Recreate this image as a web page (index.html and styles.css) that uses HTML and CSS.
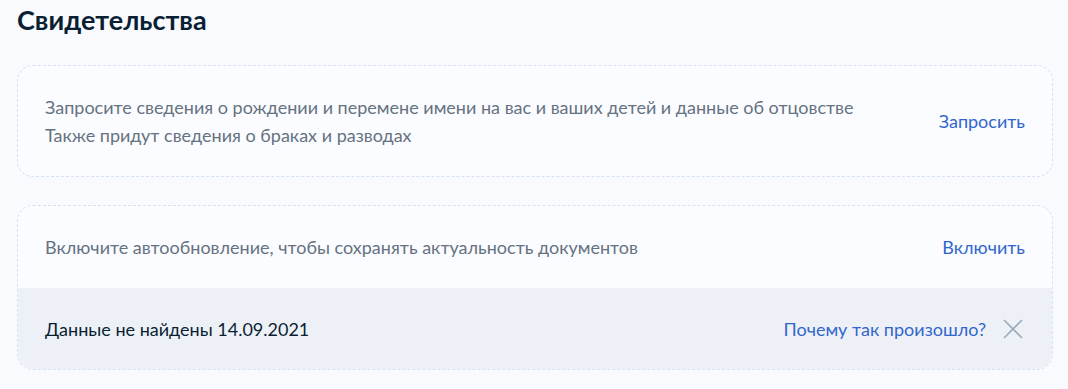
FILE: index.html
```html
<!DOCTYPE html>
<html lang="ru">
<head>
  <meta charset="UTF-8">
  <meta name="viewport" content="width=device-width, initial-scale=1.0">
  <title>Свидетельства</title>
  <link rel="stylesheet" href="styles.css">
</head>
<body>
  <main class="page">
    <h1 class="title">Свидетельства</h1>

    <!-- Request card -->
    <section class="card">
      <div class="row">
        <p class="row-text">Запросите сведения о рождении и перемене имени на вас и ваших детей и данные об отцовстве<br>Также придут сведения о браках и разводах</p>
        <a class="link" href="#">Запросить</a>
      </div>
    </section>

    <!-- Auto update card -->
    <section class="card">
      <div class="row row-single">
        <p class="row-text">Включите автообновление, чтобы сохранять актуальность документов</p>
        <a class="link" href="#">Включить</a>
      </div>
      <div class="row row-single row-status">
        <p class="row-text status-text">Данные не найдены 14.09.2021</p>
        <div class="status-actions">
          <a class="link" href="#">Почему так произошло?</a>
          <button class="close" type="button" aria-label="Закрыть">
            <svg width="20" height="20" viewBox="0 0 20 20" fill="none">
              <path d="M1 1L19 19M19 1L1 19" stroke="#9aabbe" stroke-width="1.6"/>
            </svg>
          </button>
        </div>
      </div>
    </section>
  </main>
</body>
</html>
```

FILE: styles.css
```css
/* General styles */
* {
  box-sizing: border-box;
}

body {
  margin: 0;
  font-family: Lato, "Liberation Sans", sans-serif;
  background-color: #f8fafe;
  color: #0b1f33;
}

.page {
  padding: 0 15px 0 17px;
}

.title {
  margin: 0;
  padding-top: 4px;
  height: 65px;
  font-size: 27px;
  line-height: 32px;
  font-weight: 700;
  color: #0b1f33;
}

/* Cards */
.card {
  border: 1px dashed #d4e2f3;
  border-radius: 16px;
  background-color: #fafcff;
  overflow: hidden;
  margin-bottom: 28px;
}

.row {
  display: flex;
  align-items: center;
  justify-content: space-between;
  padding: 27px;
}

.row-single {
  height: 82px;
  padding-top: 0;
  padding-bottom: 0;
}

.row-text {
  margin: 0;
  font-size: 18px;
  line-height: 28px;
  color: #66727f;
}

.link {
  font-size: 18px;
  line-height: 24px;
  color: #3366cc;
  text-decoration: none;
}

/* Status row */
.row-status {
  background-color: #edf1f7;
  margin: 0 -1px -1px;
  padding-left: 28px;
  padding-right: 30px;
}

.status-text {
  color: #0b1f33;
}

.status-actions {
  display: flex;
  align-items: center;
  gap: 17px;
}

.close {
  display: flex;
  padding: 0;
  border: 0;
  background: none;
  cursor: pointer;
}
```
